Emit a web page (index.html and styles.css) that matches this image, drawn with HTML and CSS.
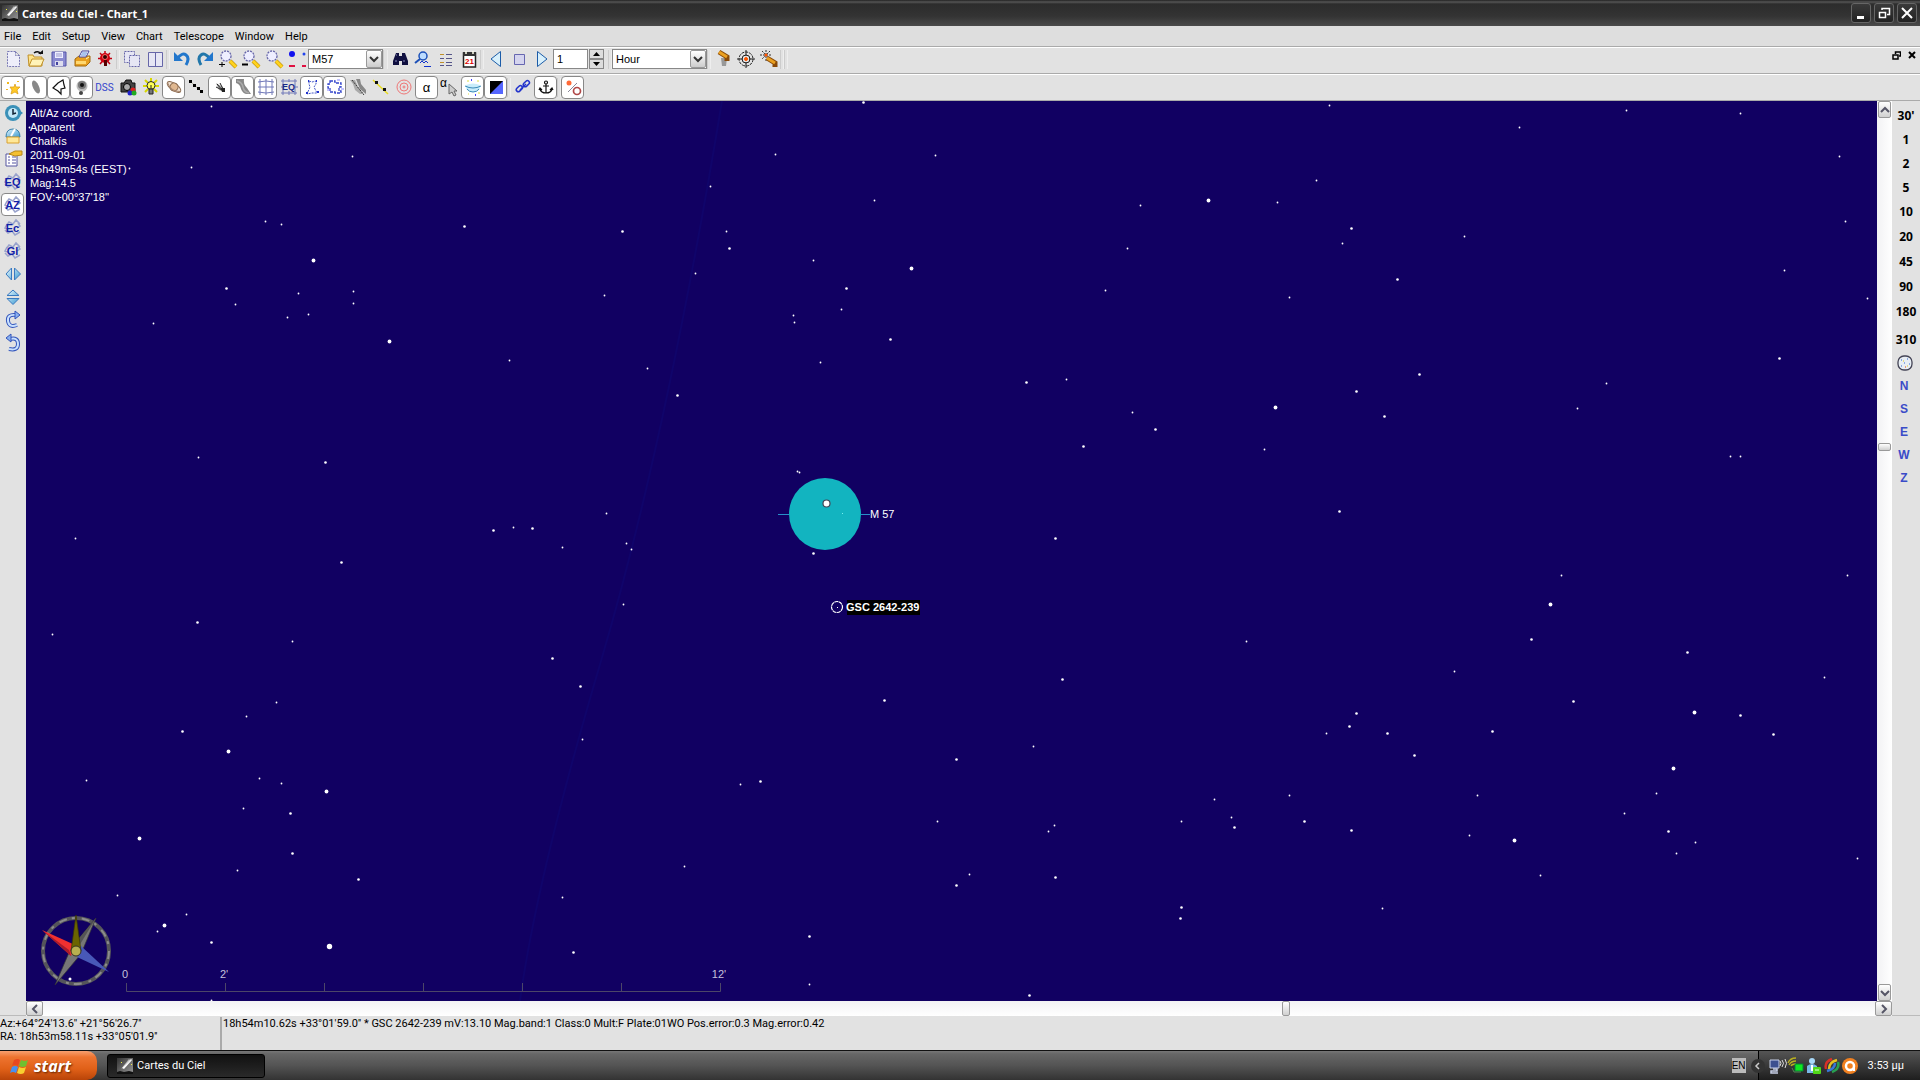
FILE: index.html
```html
<!DOCTYPE html>
<html lang="en">
<head>
<meta charset="UTF-8">
<meta name="viewport" content="width=device-width, initial-scale=1.0">
<title>Cartes du Ciel - Chart_1</title>
<link rel="stylesheet" href="styles.css">
</head>
<body>

<svg class="defs" aria-hidden="true">
    <defs>
        <linearGradient id="sky" x1="0" y1="0" x2="1" y2="1">
            <stop offset="0" stop-color="#e8f8ff"/>
            <stop offset="1" stop-color="#3a9ad0"/>
        </linearGradient>
        <linearGradient id="night" x1="0" y1="0" x2="1" y2="1">
            <stop offset="0" stop-color="#333"/>
            <stop offset="1" stop-color="#999"/>
        </linearGradient>
    </defs>
    <symbol id="app" viewBox="0 0 16 16">
        <rect width="16" height="16" fill="url(#night)"/>
        <path d="M0 14l3-1 4 1 5-1 4 1v2H0z" fill="#111"/>
        <path d="M5 10L14 1l1 1-8 9z" fill="#fff"/>
        <path d="M4 11L12 1l2 2z" fill="#ddd" opacity=".7"/>
        <path d="M4 4h1v1H4zM14 6h1v1h-1z" fill="#ee4"/>
    </symbol>
    <symbol id="scribble" viewBox="0 0 20 20">
        <path d="M3 8l3-4 4 2 3-4 4 4M2 12l3 3 4-2 3 4 5-3M15 5l2 3-3 2M4 6l-2 4 3 1" fill="none" stroke="#99a3cc" stroke-width="1.5"/>
    </symbol>
    <symbol id="lens" viewBox="0 0 20 20">
        <path d="M12 12l6 6" stroke="#b98a00" stroke-width="4"/>
        <path d="M12 12l6 6" stroke="#ffd21f" stroke-width="3"/>
        <circle cx="8" cy="7" r="5" fill="#eef" stroke="#6666a8" stroke-width="1.3" stroke-dasharray="2 1"/>
    </symbol>
</svg>

<header class="titlebar">
    <svg class="app-icon"><use href="#app"/></svg>
    <h1>Cartes du Ciel - Chart_1</h1>
    <div class="window-buttons">
        <button aria-label="Minimize"><svg width="14" height="14"><path d="M3 10h7v3H3z" fill="#fff"/></svg></button>
        <button aria-label="Restore"><svg width="14" height="14" fill="none" stroke="#fff" stroke-width="1.5"><path d="M5 4V2.5h7.5v6H10"/><path d="M2.5 6.5h6v5h-6z"/></svg></button>
        <button aria-label="Close"><svg width="14" height="14"><path d="M2 2l10 10M12 2L2 12" stroke="#fff" stroke-width="2"/></svg></button>
    </div>
</header>

<nav class="menubar">
    <button>File</button>
    <button>Edit</button>
    <button>Setup</button>
    <button>View</button>
    <button>Chart</button>
    <button>Telescope</button>
    <button>Window</button>
    <button>Help</button>
</nav>

<div class="toolbar">
    <button class="tool" aria-label="New"><svg><path d="M4.5 2.5h8l4 4v11h-12zM12.5 2.5v4h4" fill="#eeeefa" stroke="#7878b4" stroke-dasharray="2 1"/></svg></button>
    <button class="tool" aria-label="Open"><svg><path d="M2 6h5l1 2h8v9H3z" fill="#ffe48a" stroke="#c09028"/><path d="M3 17L6 10h12l-3 7z" fill="#fff3b8" stroke="#c09028"/><path d="M8 4q4-3 7 1" fill="none" stroke="#111" stroke-width="1.5"/><path d="M12 5h5V1z" fill="#111"/></svg></button>
    <button class="tool" aria-label="Save"><svg><path d="M3 3h14v14H3z" fill="#8a8ad0" stroke="#5555a8"/><path d="M6 3h8v6H6z" fill="#eef"/><path d="M6 12h8v5H6z" fill="#dde"/><path d="M7 13h2v3H7z" fill="#4444a0"/><path d="M7 5h6M7 7h6" stroke="#99c"/></svg></button>
    <button class="tool" aria-label="Print"><svg><path d="M3 10l4-3h11v6l-4 4H3z" fill="#e8a020" stroke="#a06a10"/><path d="M7 8l3-6h7l-3 6z" fill="#fff" stroke="#4444a0"/><path d="M10 4h5M9 6h5" stroke="#5588dd"/><path d="M4 12h10v3H4z" fill="#ffd870"/><path d="M14 10l3-2" stroke="#fff3b8"/></svg></button>
    <button class="tool" aria-label="Night vision"><svg><path d="M10 2v15M3 9.5h14M5 4l10 11M15 4L5 15" stroke="#c00010" stroke-width="1.5"/><circle cx="10" cy="9" r="5" fill="#d00010"/><circle cx="10" cy="8" r="2.5" fill="#300" stroke="#f66"/><path d="M9 11h3v6H9z" fill="#500"/></svg></button>
    <span class="sep"></span>
    <button class="tool" aria-label="Cascade"><svg fill="#e6e6f4" stroke="#6666a8" stroke-dasharray="2 1"><path d="M2.5 2.5h10v11h-10z"/><path d="M7.5 6.5h10v11h-10z"/></svg></button>
    <button class="tool" aria-label="Tile"><svg fill="#e6e6f4" stroke="#6666a8"><path d="M3.5 3.5h14v14h-14zM10.5 3.5v14"/></svg></button>
    <span class="sep"></span>
    <button class="tool" aria-label="Undo"><svg><path d="M5 10q5-7 9-4t0 10" fill="none" stroke="#2277cc" stroke-width="3"/><path d="M2 3v9h9z" fill="#2277cc"/></svg></button>
    <button class="tool" aria-label="Redo"><svg><path d="M15 10Q10 3 6 6t0 10" fill="none" stroke="#2277aa" stroke-width="3"/><path d="M18 3v9H9z" fill="#2277cc"/></svg></button>
    <button class="tool" aria-label="Zoom in"><svg><use href="#lens"/><path d="M1 15.5h6M4 13v5" stroke="#000"/></svg></button>
    <button class="tool" aria-label="Zoom out"><svg><use href="#lens"/><path d="M1 15.5h6" stroke="#000" stroke-width="2"/></svg></button>
    <button class="tool" aria-label="Zoom"><svg><use href="#lens"/></svg></button>
    <button class="tool" aria-label="Star size"><svg><circle cx="5" cy="5" r="3" fill="#1111ee"/><circle cx="17" cy="5" r="1.5" fill="#2244ee"/><path d="M2 16h6v2H2zM15 16h4v2h-4z" fill="#e01040"/></svg></button>
    <span class="combo search">
        <select aria-label="Search object"><option>M57</option></select>
        <span class="arrow"><svg width="10" height="7"><path d="M1 1l4 4 4-4" fill="none" stroke="#333" stroke-width="2"/></svg></span>
    </span>
    <span class="sep wide"></span>
    <button class="tool" aria-label="Search"><svg><path d="M6 4h3v3h3V4h3l3 8v4h-6v-4H9v4H3v-4z" fill="#101040"/><path d="M5 12h2M13 12h2M6 6h1" stroke="#88b"/></svg></button>
    <button class="tool" aria-label="Advanced search"><svg><circle cx="10" cy="7" r="4" fill="#bcdcff" stroke="#1c50b8" stroke-width="1.5"/><path d="M7 10l-5 4" stroke="#1c50b8" stroke-width="2"/><path d="M7 14l2-2 2 2 2-2 2 2M11 17.5h7" fill="none" stroke="#1133cc"/></svg></button>
    <button class="tool" aria-label="Object list"><svg><path d="M4 5.5h4M4 13.5h4" stroke="#c09028"/><path d="M4 9.5h4M4 16.5h4M10 5.5h6M10 9.5h6M10 13.5h6M10 16.5h6" stroke="#555588"/></svg></button>
    <button class="tool" aria-label="Date and time"><svg><path d="M4.5 4h12v14h-12z" fill="#fff" stroke="#222" stroke-width="1.5"/><path d="M4 3h13v4H4z" fill="#333"/><path d="M7 2v3M14 2v3" stroke="#ffe" stroke-width="1.5"/><text x="6" y="15" font-size="8" font-weight="bold" fill="#d00">21</text></svg></button>
    <span class="sep"></span>
    <button class="tool" aria-label="Step back"><svg><path d="M14.5 2.5v15L5 10z" fill="#d8f0fc" stroke="#1c5ca8"/></svg></button>
    <button class="tool" aria-label="Now"><svg><path d="M5.5 5.5h10v10h-10z" fill="#d4d4ee" stroke="#6666b0"/></svg></button>
    <button class="tool" aria-label="Step forward"><svg><path d="M5.5 2.5v15L15 10z" fill="#d8f0fc" stroke="#1c5ca8"/></svg></button>
    <input class="step" type="text" value="1" aria-label="Time step">
    <span class="spinner">
        <button aria-label="Increase"><svg width="7" height="4"><path d="M0 4h7L3.5 0z"/></svg></button>
        <button aria-label="Decrease"><svg width="7" height="4"><path d="M0 0h7L3.5 4z"/></svg></button>
    </span>
    <span class="sep"></span>
    <span class="combo unit">
        <select aria-label="Time unit"><option>Hour</option></select>
        <span class="arrow"><svg width="10" height="7"><path d="M1 1l4 4 4-4" fill="none" stroke="#333" stroke-width="2"/></svg></span>
    </span>
    <span class="sep"></span>
    <button class="tool" aria-label="Connect telescope"><svg><path d="M8 9h6l-1 8H9z" fill="#999"/><path d="M6 3l8 5v4" fill="none" stroke="#8a4a08" stroke-width="5"/><path d="M6 3l8 5" stroke="#eaa020" stroke-width="3"/></svg></button>
    <button class="tool" aria-label="Slew"><svg fill="none" stroke="#222"><circle cx="10" cy="10" r="7" stroke-dasharray="3 1"/><circle cx="10" cy="10" r="4"/><path d="M10 1v6M10 13v6M1 10h6M13 10h6"/><circle cx="10" cy="10" r="1.5" fill="#f50" stroke="#f50"/></svg></button>
    <button class="tool" aria-label="Sync"><svg><path d="M1 6h12M7 1v11M3 2l8 8M11 2L3 10" stroke="#333" stroke-dasharray="2 1"/><circle cx="7" cy="6" r="1.5" fill="#f50"/><path d="M8 9l8 5v4" fill="none" stroke="#8a4a08" stroke-width="5"/><path d="M8 9l8 5" stroke="#eaa020" stroke-width="3"/></svg></button>
    <span class="sep"></span>
    <span class="sep"></span>
    <div class="mdi-buttons">
        <button aria-label="Restore chart"><svg width="9" height="9" fill="none" stroke="#000" stroke-width="1.5"><path d="M3.5 3V1h5v4H7"/><path d="M1 4h5v4H1z"/></svg></button>
        <button aria-label="Close chart"><svg width="9" height="9"><path d="M1 1l6 6M7 1L1 7" stroke="#000" stroke-width="2"/></svg></button>
    </div>
</div>

<div class="toolbar second">
    <button class="tool on" aria-label="Stars"><svg><path d="M12 7l1 3h4l-3 3 1 4-3-2-4 2 1-4-2-3h4z" fill="#ffc928" stroke="#d89a10" stroke-width=".7"/><path d="M4 5h2v2H4zM3 12h2v1H3zM14 4h2v1h-2z" fill="#f0b820"/></svg></button>
    <button class="tool on" aria-label="Galaxies"><svg><ellipse cx="10" cy="10" rx="3" ry="7" transform="rotate(-25 10 10)" fill="#888"/></svg></button>
    <button class="tool on" aria-label="Outlines"><svg><path d="M9 6l5-3 1 5 1 3-4 1v5l-3-3-5-3z" fill="none" stroke="#111" stroke-width="1.2"/></svg></button>
    <button class="tool on" aria-label="Pictures"><svg><circle cx="10" cy="9" r="5.5" fill="#bbb"/><circle cx="10" cy="8" r="4" fill="#777"/><circle cx="10" cy="8" r="2" fill="#111"/><circle cx="9" cy="16" r="2" fill="#444"/></svg></button>
    <button class="tool dss">DSS</button>
    <button class="tool" aria-label="Picture settings"><svg><path d="M3 6h3l2-3h5l1 3h3v9H3z" fill="#444" stroke="#111"/><circle cx="9" cy="10" r="3.5" fill="#aaa" stroke="#000"/><circle cx="15" cy="13" r="2.5" fill="#d22"/><circle cx="12" cy="16" r="2.5" fill="#22c"/><circle cx="16" cy="16" r="2.5" fill="#2a2"/></svg></button>
    <button class="tool" aria-label="Blink"><svg><path d="M10 1v4M2 9h4M14 9h4M4 3l3 3M16 3l-3 3M4 15l3-3M16 15l-3-3" stroke="#d8d800" stroke-width="2"/><circle cx="10" cy="8.500" r="4" fill="#ffff55" stroke="#222"/><path d="M8 12h4v5H8z" fill="#777" stroke="#222"/><path d="M10 8v4" stroke="#222"/></svg></button>
    <button class="tool on" aria-label="Planets"><svg><g transform="rotate(35 10 10)"><ellipse cx="10" cy="10" rx="8" ry="3.5" fill="#f0e0d0" stroke="#8a6a50"/><circle cx="10" cy="10" r="4" fill="#e0b890" stroke="#8a6a50"/><path d="M2 10q8 6 16 0" fill="none" stroke="#a88870"/></g></svg></button>
    <button class="tool" aria-label="Asteroids"><svg><path d="M3 4l13 12" stroke="#b8b8a0"/><path d="M2 3h3v3H2zM6 7h3v3H6zM10 10h3v3h-3zM13 13h3v3h-3z" fill="#000"/></svg></button>
    <button class="tool on" aria-label="Comets"><svg><path d="M6 6l7 4 1 5-5-2z" fill="#aaa"/><path d="M7 7l6 7M10 6l4 8M6 10l8 4" stroke="#222"/><path d="M11 11h4v4h-3z" fill="#222"/></svg></button>
    <button class="tool on" aria-label="Milky Way"><svg><path d="M3 2h8q-1 5 3 9l4 6h-4q-4 0-6-5Q7 7 3 6z" fill="#888"/><path d="M4 4q5 1 6 6t6 6" fill="none" stroke="#aaa" stroke-width="1.5"/></svg></button>
    <button class="tool on" aria-label="Grid"><svg fill="none" stroke="#7078b8"><path d="M4 2v16M10 2v16M16 2v16M2 5q8-2 16 0M2 10h16M2 15q8 2 16 0"/></svg></button>
    <button class="tool" aria-label="Equatorial grid"><svg><path d="M4 2v16M16 2v16M10 2v3M10 14v4M2 4h16M2 16h16M2 10h2M16 10h3" stroke="#7078b8"/><text x="3" y="13" font-size="9" font-weight="bold" fill="#1a2a88">EQ</text></svg></button>
    <button class="tool on" aria-label="Constellation figures"><svg><path d="M7 4l3 1 4-1v3l-2 3 3 6h-5l-5 1 3-7-1-3z" fill="none" stroke="#4458c8" stroke-dasharray="2 1"/><path d="M4 16h2M14 4h1M15 15h2M6 4h1" stroke="#2233cc" stroke-width="2"/></svg></button>
    <button class="tool on" aria-label="Constellation boundaries"><svg><path d="M5 4h5v2h6v4h-2v4h2v2h-6v-1H5v-4H3V7h2z" fill="none" stroke="#3344cc" stroke-width="1.3" stroke-dasharray="3 1"/><path d="M2 13h3M12 3h3M16 12h3" stroke="#88f"/></svg></button>
    <button class="tool" aria-label="Galactic equator"><svg><path d="M2 3h5l3 7 6 7h-4l-5-4-2-6z" fill="#aaa"/><path d="M8 2h4l1 5 5 6v4l-6-5z" fill="#888"/><path d="M4 3l12 15" stroke="#333" stroke-dasharray="2 1"/></svg></button>
    <button class="tool" aria-label="Ecliptic"><svg><path d="M2 3l15 14" stroke="#e8dc20" stroke-width="1.5"/><path d="M4 4h3v3H4zM12 11h3v3h-3z" fill="#111"/></svg></button>
    <button class="tool" aria-label="Target circle"><svg fill="none" stroke="#ee7777"><circle cx="10" cy="10" r="7"/><circle cx="10" cy="10" r="4"/><circle cx="10" cy="10" r="1"/></svg></button>
    <button class="tool on glyph">α</button>
    <button class="tool" aria-label="Edit label"><svg><text x="0" y="10" font-size="12" fill="#000">α</text><path d="M9 7v10l3-2 2 4 2-1-2-4h3z" fill="#ccc" stroke="#666"/></svg></button>
    <button class="tool on" aria-label="Horizon"><svg><path d="M3 8q7-3 14 0v3q-1 4-7 4t-7-4z" fill="#c8ecfa"/><path d="M2 9q8 4 16 0M4 12q2 3 6 3t6-3" fill="none" stroke="#3a8ab8"/><path d="M4 4h2M14 4h2M5 17h1M15 16h2" stroke="#dd4"/><path d="M8 3h1M12 18h1" stroke="#44f" stroke-width="2"/></svg></button>
    <button class="tool on" aria-label="Sky background"><svg><path d="M4 4h13v13H4z" fill="#5566ff"/><path d="M4 4h13L4 17z" fill="#000"/></svg></button>
    <span class="sep"></span>
    <button class="tool" aria-label="Link charts"><svg fill="none" stroke="#2233cc" stroke-width="1.5"><rect x="3" y="10" width="7" height="4" rx="2" transform="rotate(-45 6 12)"/><rect x="10" y="5" width="7" height="4" rx="2" transform="rotate(-45 13 7)"/><path d="M7 13l6-6"/></svg></button>
    <button class="tool on" aria-label="Lock"><svg fill="none" stroke="#111" stroke-width="1.2"><circle cx="10" cy="5.500" r="1.500"/><path d="M10 7v9M7 9h6M4 12q1 4 6 4t6-4M3 13l1-2 2 2M17 13l-1-2-2 2"/></svg></button>
    <span class="sep"></span>
    <button class="tool on" aria-label="Rise and set"><svg><circle cx="6" cy="6" r="2.5" fill="#ff6a38"/><path d="M5 15L14 6" stroke="#889"/><circle cx="14" cy="14" r="3.5" fill="#fff" stroke="#b04848" stroke-width="1.7"/></svg></button>
</div>

<main class="workspace">
    <aside class="sidebar">
        <button class="tool" aria-label="Clock"><svg><circle cx="10" cy="10" r="8" fill="#3a90b8"/><path d="M16 7l4 3-4 3z" fill="#3a90b8"/><circle cx="10" cy="10" r="5" fill="#c4e8f8"/><path d="M10 6v5l3-1" fill="none" stroke="#123" stroke-width="1.5"/></svg></button>
        <button class="tool" aria-label="Observatory"><svg><path d="M3 11q0-8 7-8t7 8z" fill="url(#sky)" stroke="#3a80a8"/><path d="M8 10l4-7" stroke="#fff" stroke-width="2"/><path d="M4 11h12v6H4z" fill="#ffe898" stroke="#d8a030"/></svg></button>
        <button class="tool" aria-label="Settings"><svg><path d="M3 5h11v12H3z" fill="#fff" stroke="#5555a0"/><path d="M5 8h2M5 11h2M5 14h2M9 8h4M9 11h4M9 14h4" stroke="#5555a0"/><path d="M6 5l6-3h7v4l-7 1z" fill="#f4c030" stroke="#b88818"/></svg></button>
        <button class="tool coord"><svg><use href="#scribble"/></svg><b>EQ</b></button>
        <button class="tool coord on"><svg><use href="#scribble"/></svg><b>AZ</b></button>
        <button class="tool coord"><svg><use href="#scribble"/></svg><b>Ec</b></button>
        <button class="tool coord"><svg><use href="#scribble"/></svg><b>Gl</b></button>
        <button class="tool" aria-label="Mirror horizontally"><svg><path d="M8.5 4v12L3 10zM11.5 4v12l6-6z" fill="url(#sky)" stroke="#3a7ac0"/></svg></button>
        <button class="tool" aria-label="Mirror vertically"><svg><path d="M4 8.5h12L10 3zM4 11.5h12l-6 6z" fill="url(#sky)" stroke="#3a7ac0"/></svg></button>
        <button class="tool" aria-label="Rotate right"><svg><path d="M14 15q-8 3-9-4t8-6" fill="none" stroke="#3355bb" stroke-width="4"/><path d="M14 15q-8 3-9-4t8-6" fill="none" stroke="#c8e0ff" stroke-width="2"/><path d="M12 1l5 4-5 4z" fill="#88b0f0" stroke="#3355bb"/></svg></button>
        <button class="tool" aria-label="Rotate left"><svg><path d="M6 16q9 2 9-5T7 6" fill="none" stroke="#3355bb" stroke-width="4"/><path d="M6 16q9 2 9-5T7 6" fill="none" stroke="#c8e0ff" stroke-width="2"/><path d="M8 1L3 5l5 4z" fill="#88b0f0" stroke="#3355bb"/></svg></button>
    </aside>

    <section class="chart">
        <svg class="sky" id="sky-map">
            <path d="M696 0Q640 340 575 560T494 900" fill="none" stroke="#10046a" stroke-width="2"/>
            <g id="stars" fill="#fff"></g>

            <!-- M 57 -->
            <circle cx="799" cy="413" r="36" fill="#12b4c0"/>
            <path d="M752 413.500h11M835 413.500h9" stroke="#2890c8"/>
            <circle cx="800.5" cy="402.5" r="3.500" fill="#fff" stroke="#445" stroke-width="1.200"/>
            <path d="M816 412h1v1h-1z" fill="#7ee"/>
            <text x="844" y="417" fill="#fff">M 57</text>

            <!-- selected star -->
            <circle cx="811" cy="506" r="5.5" fill="none" stroke="#fff" stroke-width="1.2" stroke-dasharray="4 .5"/>
            <path d="M811 506h1v1h-1z" fill="#fff"/>
            <rect x="821" y="499" width="73" height="15" fill="#000"/>
            <text class="selected" x="820" y="510" fill="#fff">GSC 2642-239</text>

            <!-- scale -->
            <path d="M100.5 882v8.500h594V882M199.500 882v8M298.500 882v8M397.500 882v8M496.500 882v8M595.500 882v8" fill="none" stroke="#4c4668"/>
            <g fill="#c4c0dc" text-anchor="middle">
                <text x="99" y="877">0</text>
                <text x="198" y="877">2'</text>
                <text x="693" y="877">12'</text>
            </g>

            <!-- compass -->
            <g transform="translate(50 850)">
                <circle r="33" fill="none" stroke="#55555a" stroke-width="4"/>
                <circle r="33" fill="none" stroke="#8c8c8c" stroke-width="2" stroke-dasharray="8 5 3 7"/>
                <path d="M20 -33L5 3 -21 34 -5 -3z" fill="#777" stroke="#333" stroke-width=".7"/>
                <path d="M20 -33L-5 -3 0 0z" fill="#555"/>
                <path d="M-34 -21L-1 -6 -5 5z" fill="#f03030"/>
                <path d="M-34 -21L-5 5 -7 -1z" fill="#a81c2c"/>
                <path d="M33 21L5 -5 1 6z" fill="#4858b8"/>
                <path d="M0 -36L5 0H-5z" fill="#6b6400" stroke="#3c3800" stroke-width=".7"/>
                <circle r="5" fill="#b8b050" stroke="#332"/>
                <circle cx="-6" cy="28" r="1.5" fill="#fff"/>
            </g>
        </svg>
        <ul class="chart-info">
            <li>Alt/Az coord.</li>
            <li>Apparent</li>
            <li>Chalkís</li>
            <li>2011-09-01</li>
            <li>15h49m54s (EEST)</li>
            <li>Mag:14.5</li>
            <li>FOV:+00°37'18''</li>
        </ul>
    </section>

    <div class="scroll vertical">
        <button aria-label="Scroll up"><svg width="10" height="8"><path d="M1 6l4-4 4 4" fill="none" stroke="#556" stroke-width="2"/></svg></button>
        <span class="before"></span>
        <span class="thumb"></span>
        <span class="after"></span>
        <button aria-label="Scroll down"><svg width="10" height="8"><path d="M1 2l4 4 4-4" fill="none" stroke="#556" stroke-width="2"/></svg></button>
    </div>

    <div class="scroll horizontal">
        <button aria-label="Scroll left"><svg width="8" height="10"><path d="M6 1L2 5l4 4" fill="none" stroke="#556" stroke-width="2"/></svg></button>
        <span class="before"></span>
        <span class="thumb"></span>
        <span class="after"></span>
        <button aria-label="Scroll right"><svg width="8" height="10"><path d="M2 1l4 4-4 4" fill="none" stroke="#556" stroke-width="2"/></svg></button>
    </div>

    <aside class="fieldbar">
        <button class="low">30'</button>
        <button class="low">1</button>
        <button class="low">2</button>
        <button class="low">5</button>
        <button>10</button>
        <button>20</button>
        <button>45</button>
        <button>90</button>
        <button>180</button>
        <button class="last">310</button>
        <button class="allsky" aria-label="Whole sky"><svg width="16" height="16"><rect x="1" y="1" width="14" height="14" rx="6" fill="#e8eef4" stroke="#445" stroke-width="1.3"/><path d="M4 5h1M10 4h1M7 8h1M12 9h1M4 11h1" stroke="#36c"/><path d="M8 12h1" stroke="#e40"/><path d="M6 6h1M10 11h1" stroke="#dc2"/></svg></button>
        <button class="dir">N</button>
        <button class="dir">S</button>
        <button class="dir">E</button>
        <button class="dir">W</button>
        <button class="dir">Z</button>
    </aside>
</main>

<div class="statusbar">
    <p class="position">Az:+64°24'13.6'' +21°56'26.7''<br>RA: 18h53m58.11s +33°05'01.9''</p>
    <p>18h54m10.62s +33°01'59.0'' * GSC 2642-239 mV:13.10 Mag.band:1 Class:0 Mult:F Plate:01WO Pos.error:0.3 Mag.error:0.42</p>
</div>

<footer class="taskbar">
    <button class="start">
        <svg width="20" height="20"><path d="M4 4q4-2 6 0L8 10q-3-2-6 0z" fill="#e84820"/><path d="M11 4q4 2 7 0l-2 6q-3 2-7 0z" fill="#70c030"/><path d="M2 11q3-2 6 0l-2 6q-3-2-6 0z" fill="#4890f0"/><path d="M9 11q4 2 7 0l-2 6q-3 2-7 0z" fill="#f8d030"/></svg>
        start
    </button>
    <button class="task"><svg class="app-icon"><use href="#app"/></svg>Cartes du Ciel</button>
    <span class="lang">EN</span>
    <div class="tray">
        <button class="expand" aria-label="Show hidden icons"><svg width="14" height="14"><circle cx="7" cy="7" r="7" fill="#333"/><path d="M8 4L5 7l3 3" fill="none" stroke="#ccc" stroke-width="1.5"/></svg></button>
        <svg width="18" height="18"><path d="M1 3h9v8H1z" fill="#3c5090" stroke="#c8d0e8"/><path d="M4 12h4v2H2v2h7" fill="none" stroke="#c8d0e8" stroke-width="1.5"/><path d="M11 4q2 2 0 5M13 3q3 3 0 7M16 2q3 4 0 9" fill="none" stroke="#ddd"/></svg>
        <svg width="18" height="18"><path d="M1 6q2-5 8-5M2 8q2-4 7-4M4 9q1-2 5-2" fill="none" stroke="#b8b020" stroke-width="1.3"/><path d="M8 7h8v7H8z" fill="#10e820" stroke="#083"/><path d="M5 11l2 4h7" fill="none" stroke="#585"/></svg>
        <svg width="18" height="18"><circle cx="7" cy="4" r="3" fill="#a8d8f8"/><path d="M2 16V9q5-4 10 0v7z" fill="#78b8e8"/><path d="M6 8h2v6H6z" fill="#fff"/><rect x="8" y="10" width="8" height="7" rx="1" fill="#50d818"/><path d="M10 13h4" stroke="#dfd"/></svg>
        <svg width="18" height="18" fill="none" stroke-width="2.5"><path d="M3 12Q1 5 9 2" stroke="#d83028"/><path d="M6 12Q6 5 14 3" stroke="#e8c020"/><path d="M15 5q2 7-6 10" stroke="#28a050"/><path d="M12 6q0 6-8 8" stroke="#3878d8"/></svg>
        <svg width="18" height="18"><circle cx="9" cy="9" r="8" fill="#f08020"/><circle cx="9" cy="9" r="4" fill="none" stroke="#fff" stroke-width="2.5"/><path d="M13 7v7" stroke="#fff" stroke-width="2"/></svg>
        <time>3:53 μμ</time>
    </div>
</footer>

<script src="script.js"></script>
</body>
</html>
```
FILE: styles.css
```css
* {
    box-sizing: border-box;
}
body {
    margin: 0;
    height: 100vh;
    display: flex;
    flex-direction: column;
    overflow: hidden;
    background-color: #e2e2e2;
    color: #000;
    font-family: "Liberation Sans", Arial, sans-serif;
    font-size: 11px;
}
button {
    margin: 0;
    padding: 0;
    border: none;
    background: none;
    color: inherit;
    font: inherit;
}
button svg {
    display: block;
}
.defs {
    position: absolute;
    width: 0;
    height: 0;
}
.app-icon {
    width: 16px;
    height: 16px;
    flex: none;
}

/* title bar */
.titlebar {
    height: 26px;
    flex: none;
    display: flex;
    align-items: center;
    gap: 4px;
    padding: 0 3px 0 2px;
    background: linear-gradient(#222, #555 2px, #2c2c2c 4px, #333 16px, #4a4a4a);
    color: #fff;
}
.titlebar h1 {
    margin: 0;
    font-family: "Noto Sans", sans-serif;
    font-size: 11px;
    font-weight: bold;
}
.window-buttons {
    display: flex;
    gap: 3px;
    margin-left: auto;
}
.window-buttons button {
    width: 20px;
    height: 20px;
    padding: 2px;
    border: 1px solid #666;
    border-radius: 3px;
    background: linear-gradient(#3a3a3a, #222);
}

/* menu */
.menubar {
    height: 21px;
    flex: none;
    display: flex;
    align-items: center;
    gap: 11px;
    padding: 0 4px;
    border-bottom: 1px solid #aaa;
    background-color: #dedede;
    font-family: Roboto, sans-serif;
}

/* toolbars */
.toolbar {
    height: 27px;
    flex: none;
    display: flex;
    align-items: center;
    padding: 0 0 3px 1px;
    border-top: 1px solid #fff;
    border-bottom: 1px solid #aaa;
}
.toolbar.second {
    padding-bottom: 1px;
}
.tool {
    width: 23px;
    height: 23px;
    flex: none;
    display: flex;
    align-items: center;
    justify-content: center;
    border: 1px solid transparent;
    border-radius: 4px;
}
.tool svg {
    width: 20px;
    height: 20px;
    flex: none;
}
.tool.on {
    border-color: #888;
    background-color: #fff;
}
.sep {
    width: 4px;
    height: 19px;
    flex: none;
    border-left: 1px solid #ccc;
    border-right: 1px solid #eee;
}
.sep.wide {
    width: 5px;
}
.dss {
    color: #3344cc;
    font-family: Roboto, sans-serif;
    font-size: 10px;
}
.glyph {
    font-size: 13px;
}
.combo {
    position: relative;
    height: 20px;
    flex: none;
}
.combo.search {
    width: 75px;
}
.combo.unit {
    width: 95px;
}
.combo select {
    appearance: none;
    width: 100%;
    height: 100%;
    padding: 0 0 0 3px;
    border: 1px solid #888;
    border-radius: 0;
    background-color: #fff;
    color: #000;
    font: inherit;
}
.combo .arrow {
    position: absolute;
    top: 1px;
    right: 1px;
    width: 16px;
    height: 18px;
    display: flex;
    align-items: center;
    justify-content: center;
    border: 1px solid #999;
    border-radius: 2px;
    background: linear-gradient(#fff, #ccc);
    pointer-events: none;
}
.step {
    width: 35px;
    height: 20px;
    padding: 0 3px;
    border: 1px solid #888;
    background-color: #fff;
    font: inherit;
}
.spinner {
    display: flex;
    flex-direction: column;
    margin: 0 4px 0 1px;
}
.spinner button {
    width: 15px;
    height: 10px;
    display: flex;
    align-items: center;
    justify-content: center;
    border: 1px solid #888;
    background-color: #ddd;
}
.mdi-buttons {
    display: flex;
    gap: 7px;
    align-self: flex-start;
    margin: 3px 3px 0 auto;
}

/* workspace */
.workspace {
    flex: 1;
    min-height: 0;
    display: grid;
    grid-template-columns: 26px 1fr 15px 28px;
    grid-template-rows: 1fr 15px;
}
.sidebar {
    grid-row: 1 / 3;
    padding-left: 1px;
    border-bottom: 1px solid #bbb;
}
.coord {
    position: relative;
    color: #1020a8;
}
.coord b {
    position: absolute;
    font-size: 11px;
}
.chart {
    position: relative;
    overflow: hidden;
    background-color: #110062;
    color: #fff;
}
.sky {
    position: absolute;
    width: 100%;
    height: 100%;
}
.sky .selected {
    font-weight: bold;
}
.chart-info {
    position: relative;
    margin: 0;
    padding: 5px 4px;
    list-style: none;
    line-height: 14px;
}

.scroll {
    display: flex;
    background: linear-gradient(#f2f2f4, #fff);
}
.scroll button,
.scroll .thumb {
    display: flex;
    align-items: center;
    justify-content: center;
    border: 1px solid #999;
    border-radius: 2px;
    background: linear-gradient(#fff, #d0d0d0);
}
.scroll.vertical {
    flex-direction: column;
    padding: 0 1px;
    background: linear-gradient(to right, #f2f2f4, #fff);
}
.scroll.vertical button {
    height: 17px;
}
.scroll.vertical .thumb {
    height: 8px;
}
.scroll.vertical .before {
    flex: 326;
}
.scroll.vertical .after {
    flex: 534;
}
.scroll.horizontal {
    grid-column: 2 / 4;
    grid-row: 2;
}
.scroll.horizontal button {
    width: 17px;
}
.scroll.horizontal .thumb {
    width: 8px;
}
.scroll.horizontal .before {
    flex: 1239;
}
.scroll.horizontal .after {
    flex: 585;
}

.fieldbar {
    grid-column: 4;
    grid-row: 1 / 3;
    display: flex;
    flex-direction: column;
    align-items: stretch;
    padding-top: 2px;
    border-bottom: 1px solid #bbb;
}
.fieldbar button {
    height: 25px;
    font-family: "Noto Sans", sans-serif;
    font-size: 12px;
    font-weight: bold;
}
.fieldbar .low {
    height: 24px;
}
.fieldbar .last {
    height: 30px;
}
.fieldbar .allsky {
    height: 18px;
    display: flex;
    align-items: center;
    justify-content: center;
    margin-bottom: 2px;
    padding-right: 2px;
}
.fieldbar .dir {
    height: 23px;
    padding-right: 4px;
    color: #3a4cc8;
    font-family: "Liberation Sans", Arial, sans-serif;
}

/* status */
.statusbar {
    height: 34px;
    flex: none;
    display: flex;
    padding-top: 1px;
    font-family: Roboto, sans-serif;
}
.statusbar p {
    margin: 0;
    padding-left: 1px;
    line-height: 13px;
}
.statusbar .position {
    width: 222px;
    padding-left: 0;
    border-right: 2px solid #aaa;
}

/* taskbar */
.taskbar {
    height: 30px;
    flex: none;
    display: flex;
    align-items: center;
    border-top: 1px solid #111;
    background: linear-gradient(#777, #666 3px, #555 14px, #333);
    color: #fff;
}
.start {
    width: 97px;
    height: 29px;
    display: flex;
    align-items: center;
    gap: 4px;
    padding-left: 10px;
    border-radius: 0 10px 10px 0;
    background: linear-gradient(#f8a070, #ee7430 6px, #e06018 18px, #b84408);
    font-family: "Open Sans", sans-serif;
    font-size: 16px;
    font-style: italic;
    font-weight: bold;
    text-shadow: 1px 1px 2px #642400;
}
.task {
    width: 158px;
    height: 24px;
    display: flex;
    align-items: center;
    gap: 4px;
    margin-left: 10px;
    padding-left: 9px;
    border: 1px solid #000;
    border-radius: 3px;
    background: linear-gradient(#111, #2a2a2a);
    font-family: Roboto, sans-serif;
}
.lang {
    margin-left: auto;
    margin-right: 12px;
    background-color: #bbb;
    color: #000;
    line-height: 15px;
    font-size: 10px;
}
.tray {
    height: 100%;
    display: flex;
    align-items: center;
    padding-right: 16px;
    border-left: 1px solid #000;
    background: linear-gradient(#555, #3a3a3a 14px, #1e1e1e);
}
.tray .expand {
    margin: 0 4px 0 -8px;
}
.tray time {
    margin-left: 9px;
    font-family: Roboto, sans-serif;
}
```
FILE: script.js
```js
// Field stars: x, y, magnitude class (1 = faintest)
var stars = [
    [705,84,2],[173,87,1],[288,128,1],[156,137,1],[106,138,1],[24,104,1],[633,126,1],[764,127,1],
    [580,152,1],[714,164,1],[217,181,1],[230,183,1],[379,185,2],[508,189,2],[593,189,1],[596,203,2],
    [256,213,3],[664,213,1],[744,219,3],[568,223,1],[185,236,2],[192,249,1],[244,240,1],[289,238,1],
    [289,248,1],[494,241,1],[235,259,1],[252,257,1],[125,264,1],[691,236,2],[687,253,1],[648,258,1],
    [649,263,1],[727,277,2],[318,279,3],[416,294,1],[670,296,1],[529,301,1],[553,323,2],[162,374,1],
    [266,378,2],[651,385,1],[653,386,1],[62,440,1],[403,433,2],[419,431,1],[435,432,2],[459,447,1],
    [495,419,1],[512,444,1],[516,449,1],[279,459,2],[509,494,1],[664,452,2],[161,508,2],[43,518,1],
    [239,524,1],[451,538,2],[474,561,2],[226,574,1],[201,585,1],[149,597,2],[187,614,3],[476,604,1],
    [71,637,1],[212,636,1],[230,640,1],[267,646,3],[199,660,1],[237,664,2],[605,641,1],[621,638,2],
    [722,572,2],[781,620,2],[114,685,3],[239,697,2],[194,711,1],[293,718,2],[559,708,1],[96,731,1],
    [459,733,1],[152,747,1],[134,756,3],[129,761,1],[173,770,2],[269,773,4],[468,778,2],[661,765,2],
    [661,804,1],[766,671,1],[781,723,2],[792,714,1],[841,813,2],[856,679,1],[861,674,1],
    [862,717,2],[844,610,1],[868,555,2],[862,440,2],[885,365,2],[925,337,1],[944,351,2],[838,312,2],
    [871,310,1],[903,237,1],[921,203,1],[931,168,1],[987,164,3],[1043,165,1],[1075,147,1],[1086,86,1],
    [1104,187,2],[1096,199,1],[1141,228,2],[1053,243,1],[1196,193,1],[1241,104,1],[1328,90,1],[1421,93,1],
    [1502,128,1],[1507,181,1],[1457,221,1],[1525,244,1],[1453,293,2],[1159,306,2],[1108,320,2],[1131,340,2],
    [1042,333,3],[1033,367,1],[1312,313,1],[1288,334,1],[1421,373,1],[1413,373,1],[1094,418,2],[1275,470,1],
    [1266,494,3],[1251,522,2],[1018,524,1],[1378,533,2],[1509,470,1],[1490,553,1],[1188,548,1],[1285,573,2],
    [1384,582,3],[1421,584,2],[1448,600,2],[1108,583,2],[1102,593,2],[1083,599,1],[1133,599,2],[1155,617,2],
    [1219,597,2],[1367,628,3],[1353,648,1],[1327,664,1],[1363,679,2],[1385,688,1],[1369,697,1],[1207,650,1],
    [1200,682,1],[1237,686,3],[1258,715,1],[1053,650,1],[1065,671,2],[1104,678,2],[992,653,1],[1006,668,1],
    [1008,676,2],[965,671,1],[965,741,2],[964,750,2],[1129,742,1],[1517,701,1],[173,817,1]
];
var radius = [0, 0.9, 1.3, 1.9, 2.7];
var scale = 1.2245;
var originX = 26;
var originY = 101;

var group = document.getElementById('stars');
stars.forEach(function(star) {
    var dot = document.createElementNS('http://www.w3.org/2000/svg', 'circle');
    dot.setAttribute('cx', Math.floor(star[0] * scale - originX) + 0.5);
    dot.setAttribute('cy', Math.floor(star[1] * scale - originY) + 0.5);
    dot.setAttribute('r', radius[star[2]]);
    group.appendChild(dot);
});
```
